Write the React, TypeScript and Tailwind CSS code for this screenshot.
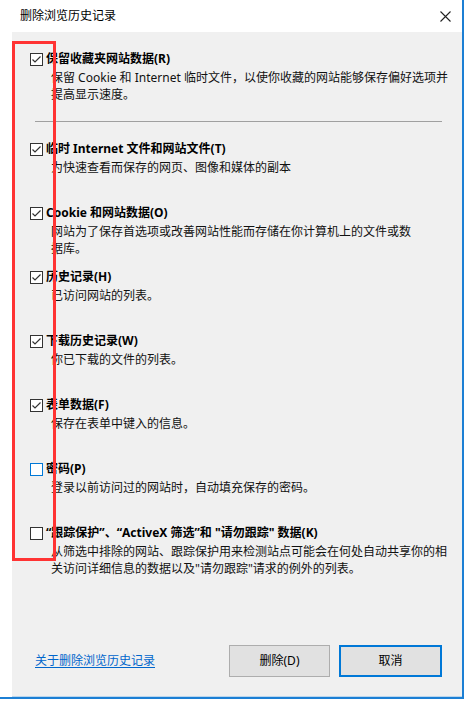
import React from 'react';

type Item = { label: React.ReactNode; desc: string[]; checked: boolean; focus?: boolean };

const items: Item[] = [
  { label: '临时 Internet 文件和网站文件(T)', desc: ['为快速查看而保存的网页、图像和媒体的副本'], checked: true },
  { label: 'Cookie 和网站数据(O)', desc: ['网站为了保存首选项或改善网站性能而存储在你计算机上的文件或数', '据库。'], checked: true },
  { label: '历史记录(H)', desc: ['已访问网站的列表。'], checked: true },
  { label: '下载历史记录(W)', desc: ['你已下载的文件的列表。'], checked: true },
  { label: '表单数据(F)', desc: ['保存在表单中键入的信息。'], checked: true },
  { label: '密码(P)', desc: ['登录以前访问过的网站时，自动填充保存的密码。'], checked: false, focus: true },
  {
    label: '“跟踪保护”、“ActiveX 筛选”和 "请勿跟踪" 数据(K)',
    desc: ['从筛选中排除的网站、跟踪保护用来检测站点可能会在何处自动共享你的相', '关访问详细信息的数据以及"请勿跟踪"请求的例外的列表。'],
    checked: false,
  },
];

const Box = ({ checked, focus }: { checked: boolean; focus?: boolean }) => (
  <div
    className={`w-[13px] h-[13px] shrink-0 border bg-white flex items-center justify-center ${
      focus ? 'border-[#0078d7]' : 'border-[#333333]'
    }`}
  >
    {checked && (
      <svg width="11" height="11" viewBox="0 0 11 11">
        <polyline points="1.5,5.5 4,8 9.5,2.5" fill="none" stroke="#333" strokeWidth="1.2" />
      </svg>
    )}
  </div>
);

const Option = ({ item, className = '' }: { item: Item; className?: string }) => (
  <div className={className}>
    <div className="flex items-center h-[20px] pl-[18px]">
      <Box checked={item.checked} focus={item.focus} />
      <span className="ml-[3px] font-bold text-[12px] leading-[20px] text-black whitespace-nowrap">{item.label}</span>
    </div>
    <div className="pl-[39px] text-[12px] leading-[17px] text-[#111]">
      {item.desc.map((d, i) => (
        <div key={i} className="whitespace-nowrap">{d}</div>
      ))}
    </div>
  </div>
);

export default function App() {
  return (
    <div
      className="relative w-[470px] h-[710px] bg-white overflow-hidden"
      style={{ fontFamily: '"Noto Sans", "Noto Sans CJK SC", sans-serif' }}
    >
      <div className="w-[464px] h-[699px] border-r-2 border-b-2 border-[#1c7fd4] flex flex-col">
        {/* title bar */}
        <div className="h-[32px] flex items-center justify-between pl-[20px] pr-[10px] shrink-0">
          <span className="text-[12px] text-black">删除浏览历史记录</span>
          <svg width="11" height="11" viewBox="0 0 11 11" className="mr-[1px]">
            <path d="M0.5 0.5 L10.5 10.5 M10.5 0.5 L0.5 10.5" stroke="#222" strokeWidth="1.1" />
          </svg>
        </div>

        {/* body */}
        <div className="flex-1 ml-[12px] bg-[#f0f0f0] border-b border-[#b9d6ee] flex flex-col">
          <Option
            item={{ label: '保留收藏夹网站数据(R)', desc: ['保留 Cookie 和 Internet 临时文件，以使你收藏的网站能够保存偏好选项并', '提高显示速度。'], checked: true }}
            className="mt-[17px]"
          />
          <div className="mt-[18px] ml-[23px] w-[407px] h-px bg-[#a0a0a0]" />
          <div className="mt-[17px]">
            {items.map((it, i) => (
              <Option key={i} item={it} className="h-[64px]" />
            ))}
          </div>

          <div className="mt-auto mb-[19px] flex items-center pl-[23px] pr-[20px]">
            <a className="text-[12px] text-[#0066cc] underline underline-offset-2 cursor-pointer">关于删除浏览历史记录</a>
            <div className="ml-auto flex gap-[9px]">
              <button className="w-[101px] h-[32px] bg-[#e1e1e1] border border-[#adadad] text-[12px] text-black">
                删除(D)
              </button>
              <button className="w-[103px] h-[32px] bg-[#e1e1e1] border-2 border-[#0078d7] text-[12px] text-black">
                取消
              </button>
            </div>
          </div>
        </div>
      </div>

      {/* red annotation box */}
      <div className="absolute left-[12px] top-[41px] w-[44px] h-[520px] border-[3px] border-[#ff3333] pointer-events-none" />
    </div>
  );
}
